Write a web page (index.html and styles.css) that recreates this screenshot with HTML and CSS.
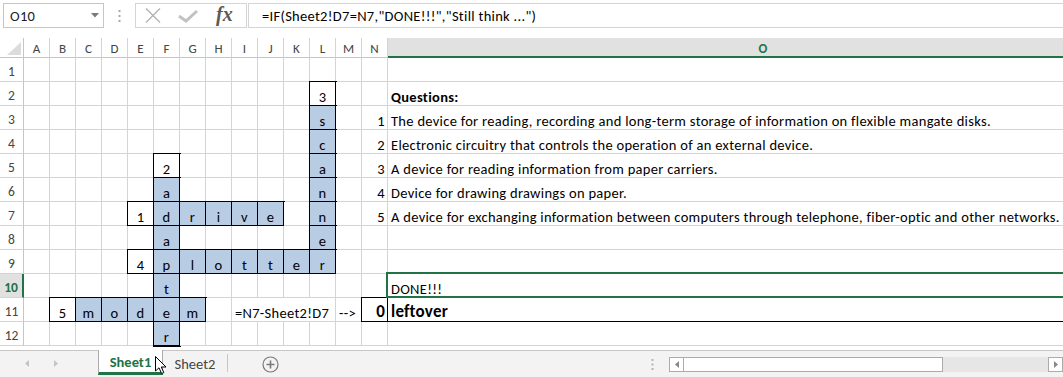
FILE: index.html
```html
<!DOCTYPE html>
<html>
<head>
<meta charset="utf-8">
<link rel="stylesheet" href="styles.css">
</head>
<body>
<div class="app">
  <div class="fbar">
    <div class="namebox"><span>O10</span><svg width="8" height="5" viewBox="0 0 8 5"><path d="M0 0 L8 0 L4 4.5 Z" fill="#7a7a7a"/></svg></div>
    <div class="grip"><svg width="3" height="12" viewBox="0 0 3 12"><rect x="0.5" y="0" width="2" height="2" fill="#a8a8a8"/><rect x="0.5" y="5" width="2" height="2" fill="#a8a8a8"/><rect x="0.5" y="10" width="2" height="2" fill="#a8a8a8"/></svg></div>
    <div class="fxgroup">
      <svg class="ico-x" width="16" height="15" viewBox="0 0 16 15"><path d="M1 0.5 L15 14.5 M15 0.5 L1 14.5" stroke="#b3b3b3" stroke-width="1.4" fill="none"/></svg>
      <svg class="ico-ok" width="20" height="14" viewBox="0 0 20 14"><path d="M1 7 L8 12 L19 2" stroke="#c2c2c2" stroke-width="3" fill="none"/></svg>
      <span class="fx">fx</span>
    </div>
    <div class="formula">=IF(Sheet2!D7=N7,"DONE!!!","Still think ...")</div>
  </div>

  <div class="sheet">
    <div class="corner"><svg width="23" height="19" viewBox="0 0 23 19"><path d="M7 17 L21 17 L21 4 Z" fill="#dcdcdc"/></svg></div>
    <div class="ch">A</div><div class="ch">B</div><div class="ch">C</div><div class="ch">D</div><div class="ch">E</div><div class="ch">F</div><div class="ch">G</div><div class="ch">H</div><div class="ch">I</div><div class="ch">J</div><div class="ch">K</div><div class="ch">L</div><div class="ch">M</div><div class="ch">N</div><div class="ch hsel">O</div>

    <div class="rh">1</div>
    <div class="c"></div><div class="c"></div><div class="c"></div><div class="c"></div><div class="c"></div><div class="c"></div><div class="c"></div><div class="c"></div><div class="c"></div><div class="c"></div><div class="c"></div><div class="c"></div><div class="c"></div><div class="c"></div><div class="c t"></div>

    <div class="rh">2</div>
    <div class="c"></div><div class="c"></div><div class="c"></div><div class="c"></div><div class="c"></div><div class="c"></div><div class="c"></div><div class="c"></div><div class="c"></div><div class="c"></div><div class="c"></div><div class="c b">3</div><div class="c"></div><div class="c"></div><div class="c t"><b>Questions:</b></div>

    <div class="rh">3</div>
    <div class="c"></div><div class="c"></div><div class="c"></div><div class="c"></div><div class="c"></div><div class="c"></div><div class="c"></div><div class="c"></div><div class="c"></div><div class="c"></div><div class="c"></div><div class="c b f">s</div><div class="c"></div><div class="c n">1</div><div class="c t">The device for reading, recording and long-term storage of information on flexible mangate disks.</div>

    <div class="rh">4</div>
    <div class="c"></div><div class="c"></div><div class="c"></div><div class="c"></div><div class="c"></div><div class="c"></div><div class="c"></div><div class="c"></div><div class="c"></div><div class="c"></div><div class="c"></div><div class="c b f">c</div><div class="c"></div><div class="c n">2</div><div class="c t">Electronic circuitry that controls the operation of an external device.</div>

    <div class="rh">5</div>
    <div class="c"></div><div class="c"></div><div class="c"></div><div class="c"></div><div class="c"></div><div class="c b">2</div><div class="c"></div><div class="c"></div><div class="c"></div><div class="c"></div><div class="c"></div><div class="c b f">a</div><div class="c"></div><div class="c n">3</div><div class="c t">A device for reading information from paper carriers.</div>

    <div class="rh">6</div>
    <div class="c"></div><div class="c"></div><div class="c"></div><div class="c"></div><div class="c"></div><div class="c b f">a</div><div class="c"></div><div class="c"></div><div class="c"></div><div class="c"></div><div class="c"></div><div class="c b f">n</div><div class="c"></div><div class="c n">4</div><div class="c t">Device for drawing drawings on paper.</div>

    <div class="rh">7</div>
    <div class="c"></div><div class="c"></div><div class="c"></div><div class="c"></div><div class="c b">1</div><div class="c b f">d</div><div class="c b f">r</div><div class="c b f">i</div><div class="c b f">v</div><div class="c b f">e</div><div class="c"></div><div class="c b f">n</div><div class="c"></div><div class="c n">5</div><div class="c t">A device for exchanging information between computers through telephone, fiber-optic and other networks.</div>

    <div class="rh">8</div>
    <div class="c"></div><div class="c"></div><div class="c"></div><div class="c"></div><div class="c"></div><div class="c b f">a</div><div class="c"></div><div class="c"></div><div class="c"></div><div class="c"></div><div class="c"></div><div class="c b f">e</div><div class="c"></div><div class="c"></div><div class="c t"></div>

    <div class="rh">9</div>
    <div class="c"></div><div class="c"></div><div class="c"></div><div class="c"></div><div class="c b">4</div><div class="c b f">p</div><div class="c b f">l</div><div class="c b f">o</div><div class="c b f">t</div><div class="c b f">t</div><div class="c b f">e</div><div class="c b f">r</div><div class="c"></div><div class="c"></div><div class="c t"></div>

    <div class="rh rsel">10</div>
    <div class="c"></div><div class="c"></div><div class="c"></div><div class="c"></div><div class="c"></div><div class="c b f">t</div><div class="c"></div><div class="c"></div><div class="c"></div><div class="c"></div><div class="c"></div><div class="c"></div><div class="c"></div><div class="c"></div><div class="c t sel">DONE!!!</div>

    <div class="rh">11</div>
    <div class="c"></div><div class="c b">5</div><div class="c b f">m</div><div class="c b f">o</div><div class="c b f">d</div><div class="c b f">e</div><div class="c b f">m</div><div class="c"></div><div class="c t span4">=N7-Sheet2!D7</div><div class="c t">--&gt;</div><div class="c n b big">0</div><div class="c t b big">leftover</div>

    <div class="rh">12</div>
    <div class="c"></div><div class="c"></div><div class="c"></div><div class="c"></div><div class="c"></div><div class="c b f">r</div><div class="c"></div><div class="c"></div><div class="c"></div><div class="c"></div><div class="c"></div><div class="c"></div><div class="c"></div><div class="c"></div><div class="c t"></div>
  </div>

  <div class="tabbar">
    <div class="nav"><svg width="98" height="27" viewBox="0 0 98 27"><path d="M25 13.5 L29 10 L29 17 Z" fill="#c4c4c4"/><path d="M54 10 L58 13.5 L54 17 Z" fill="#c4c4c4"/></svg></div>
    <div class="tab active">Sheet1</div>
    <div class="tab">Sheet2</div>
    <div class="tsep"></div>
    <div class="add"><svg width="17" height="17" viewBox="0 0 17 17"><circle cx="8.5" cy="8.5" r="7.5" fill="none" stroke="#7a7a7a" stroke-width="1.2"/><path d="M8.5 4.5 V12.5 M4.5 8.5 H12.5" stroke="#7a7a7a" stroke-width="1.6"/></svg></div>
    <div class="tgrip"><svg width="3" height="11" viewBox="0 0 3 11"><rect x="0.5" y="0" width="2" height="2" fill="#b5b5b5"/><rect x="0.5" y="4.5" width="2" height="2" fill="#b5b5b5"/><rect x="0.5" y="9" width="2" height="2" fill="#b5b5b5"/></svg></div>
    <div class="hscroll">
      <div class="sbtn"><svg width="4" height="7" viewBox="0 0 4 7"><path d="M0 3.5 L4 0 L4 7 Z" fill="#888"/></svg></div>
      <div class="thumb"></div>
      <div class="track"></div>
      <div class="sbtn"><svg width="4" height="7" viewBox="0 0 4 7"><path d="M0 0 L4 3.5 L0 7 Z" fill="#888"/></svg></div>
    </div>
  </div>

  <svg class="cursor" width="13" height="19" viewBox="0 0 13 19"><path d="M0.5 0.5 L0.5 15 L4 11.8 L6.6 17.6 L8.8 16.6 L6.3 11 L11 11 Z" fill="#fff" stroke="#000" stroke-width="1" stroke-linejoin="round"/></svg>
</div>
</body>
</html>
```

FILE: styles.css
```css
* {
  box-sizing: border-box;
  margin: 0;
  padding: 0;
}

html, body {
  width: 1063px;
  height: 377px;
  overflow: hidden;
  background: #fff;
}

body {
  font-family: Carlito, Lato, "Open Sans", sans-serif;
  color: #000;
}

.app {
  position: relative;
  width: 1063px;
  height: 377px;
  overflow: hidden;
}

/* ---------- formula bar ---------- */
.fbar {
  height: 38px;
  display: flex;
  align-items: flex-start;
  padding: 3px 0 0 3px;
}

.namebox {
  width: 101px;
  height: 25px;
  border: 1px solid #c6c6c6;
  display: flex;
  align-items: center;
  justify-content: space-between;
  padding: 0 4px 0 6px;
  font-size: 14.5px;
  letter-spacing: 0.3px;
  color: #222;
}

.grip {
  width: 31px;
  height: 25px;
  display: flex;
  align-items: center;
  justify-content: center;
}

.fxgroup {
  width: 112px;
  height: 25px;
  border: 1px solid #d4d4d4;
  display: flex;
  align-items: center;
  padding-left: 9px;
}

.ico-ok {
  margin-left: 17px;
}

.fx {
  margin-left: 18px;
  font-family: "Liberation Serif", "DejaVu Serif", serif;
  font-style: italic;
  font-weight: bold;
  font-size: 20px;
  color: #5a5a5a;
  line-height: 1;
  margin-top: -3px;
}

.formula {
  flex: 1;
  margin-left: 1px;
  height: 25px;
  border: 1px solid #d4d4d4;
  border-right: none;
  padding-left: 13px;
  font-size: 14.5px;
  letter-spacing: 0.3px;
  display: flex;
  align-items: center;
  white-space: nowrap;
}

/* ---------- sheet grid ---------- */
.sheet {
  display: grid;
  grid-template-columns: 24px repeat(14, 26px) 751px;
  grid-template-rows: 20px repeat(12, 24px);
  padding-bottom: 4px;
  width: max-content;
}

.corner {
  border-right: 1px solid #c6c6c6;
  border-bottom: 1px solid #c6c6c6;
}

.corner svg {
  display: block;
}

.ch {
  border-right: 1px solid #d4d4d4;
  border-bottom: 1px solid #c6c6c6;
  font-size: 13px;
  color: #444;
  display: flex;
  align-items: center;
  justify-content: center;
  padding-top: 1px;
}

.ch.hsel {
  background: #e1e1e1;
  border-bottom: 2px solid #217346;
  color: #217346;
  font-weight: bold;
  padding-top: 2px;
}

.rh {
  border-right: 1px solid #c6c6c6;
  border-bottom: 1px solid #d4d4d4;
  font-size: 13.5px;
  color: #444;
  display: flex;
  align-items: flex-end;
  justify-content: center;
  line-height: 18px;
  padding-bottom: 0;
}

.rh.rsel {
  background: #e1e1e1;
  border-right: 2px solid #217346;
  color: #217346;
  font-weight: bold;
}

.c {
  border-right: 1px solid #d4d4d4;
  border-bottom: 1px solid #d4d4d4;
  background: #fff;
  font-size: 14.5px;
  letter-spacing: 0.3px;
  line-height: 16px;
  padding-bottom: 0;
  display: flex;
  align-items: flex-end;
  justify-content: center;
  white-space: nowrap;
}

.c.t {
  justify-content: flex-start;
  padding-left: 3px;
}

.c.n {
  justify-content: flex-end;
  padding-right: 2px;
}

.c.b {
  border-right-color: #000;
  border-bottom-color: #000;
  box-shadow: 0 0 0 1px #000;
}

.c.f {
  background: #b8cce4;
}

.c.big {
  font-size: 17px;
  font-weight: bold;
  letter-spacing: 0.2px;
  line-height: 18px;
}

.span4 {
  grid-column: span 4;
}

.sel {
  position: relative;
}

.sel::after {
  content: "";
  position: absolute;
  top: -2px;
  bottom: -1px;
  left: -2px;
  right: -2px;
  border: 2px solid #217346;
}

/* ---------- sheet tabs ---------- */
.tabbar {
  height: 27px;
  background: #f3f3f3;
  border-top: 1px solid #c6c6c6;
  display: flex;
  align-items: flex-start;
}

.nav {
  width: 98px;
  height: 26px;
}

.nav svg {
  display: block;
  margin-top: -1px;
}

.tab {
  width: 64px;
  height: 25px;
  display: flex;
  align-items: center;
  justify-content: center;
  font-size: 14.5px;
  color: #444;
  padding-top: 1px;
}

.tab.active {
  width: 65px;
  margin-top: -1px;
  height: 25px;
  background: #fff;
  border-left: 1px solid #ababab;
  border-right: 1px solid #ababab;
  border-bottom: 3px solid #217346;
  color: #217346;
  font-weight: bold;
}

.tsep {
  width: 1px;
  height: 18px;
  margin-top: 3px;
  background: #c6c6c6;
}

.add {
  width: 84px;
  height: 26px;
  display: flex;
  align-items: center;
  justify-content: center;
}

.add svg {
  display: block;
}

.tgrip {
  margin-left: auto;
  width: 24px;
  height: 26px;
  display: flex;
  align-items: center;
  justify-content: center;
  margin-right: 5px;
}

.hscroll {
  width: 394px;
  height: 15px;
  margin-top: 6px;
  display: flex;
}

.sbtn {
  width: 15px;
  height: 15px;
  background: #fff;
  border: 1px solid #ababab;
  display: flex;
  align-items: center;
  justify-content: center;
}

.thumb {
  width: 259px;
  height: 15px;
  background: #fff;
  border: 1px solid #ababab;
  border-left: none;
}

.track {
  flex: 1;
  height: 15px;
  background: #e6e6e6;
}

.cursor {
  position: absolute;
  left: 155px;
  top: 356px;
}
```
